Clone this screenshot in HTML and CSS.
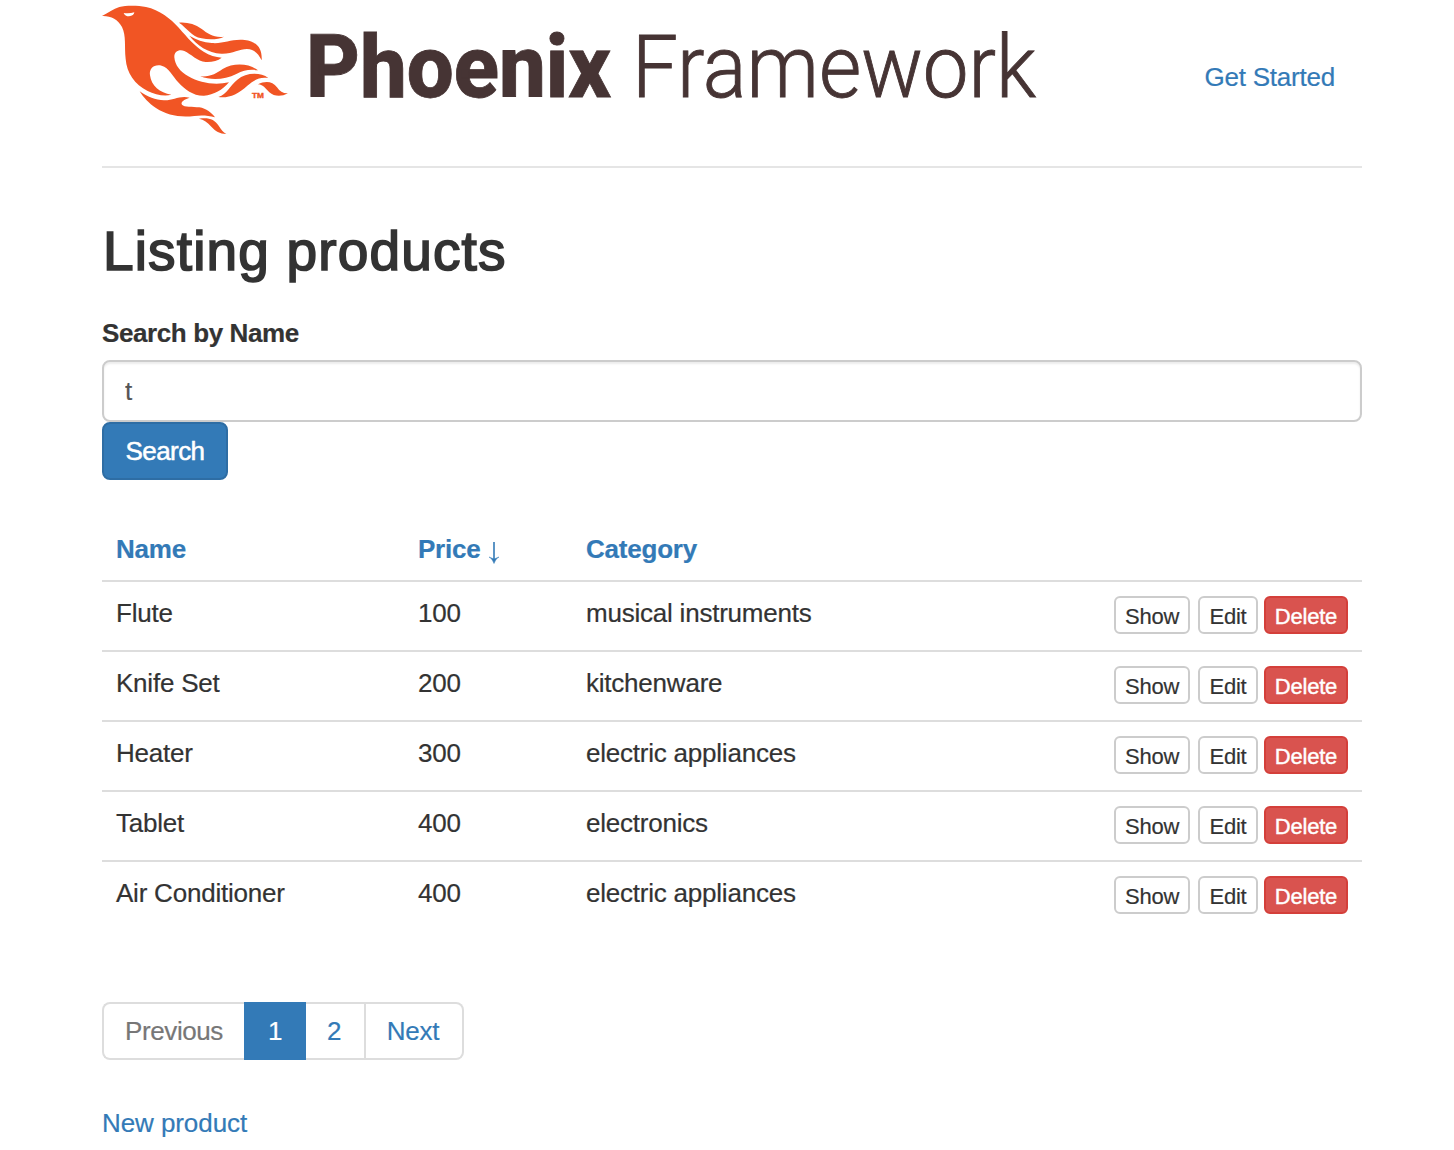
FILE: index.html
```
<!DOCTYPE html>
<html lang="en">
<head>
<meta charset="utf-8">
<title>Phoenix Framework - Listing products</title>
<link rel="stylesheet" href="styles.css">
</head>
<body>
<div class="container">
  <header class="header">
    <svg class="logo" width="940" height="140" viewBox="0 0 940 140" role="img" aria-label="Phoenix Framework">
      <g class="bird" transform="translate(-7 0) scale(.33333)">
        <path fill-rule="evenodd" d="M21 48C40 38 55 27 73 21C93 16 128 16 153 21C194 30 226 55 252 84C278 114 299 138 326 155C344 166 361 171 380 173C368 183 350 187 332 186C307 184 288 162 268 153C252 147 237 155 238 172C240 197 256 215 280 229C315 249 360 257 402 247C382 270 357 285 327 287C295 288 270 268 251 248C232 228 222 203 200 197C177 192 162 205 165 226C169 258 194 279 229 284C210 290 179 284 158 273C119 253 95 219 92 177C88 139 94 108 81 81C69 58 47 47 21 48ZM86 39Q102 42 118 37Q117 48 102 49Q90 49 86 39Z"/>
        <path d="M252 68C276 66 300 72 319 86C339 101 357 114 387 110C370 119 342 120 320 115C289 109 276 84 252 68Z"/>
        <path d="M283 107C304 119 325 127 350 129C388 132 408 116 449 120C486 124 502 145 500 181C490 161 478 148 456 147C432 147 414 162 379 161C339 159 306 136 283 107Z"/>
        <path d="M316 229C348 231 364 220 383 207C416 187 463 190 489 211C463 207 447 211 424 222C390 239 349 242 316 229Z"/>
        <path d="M370 291C397 282 403 258 427 239C453 217 496 216 520 234C493 230 478 240 457 257C428 283 402 295 370 291Z"/>
        <path d="M489 253C511 242 533 244 546 262C555 275 565 281 579 280C559 291 538 290 523 277C511 265 506 255 489 253Z"/>
        <path d="M134 274C158 291 181 300 207 301C235 302 252 286 284 293C267 298 256 306 261 314C267 322 293 319 313 322C334 326 350 338 360 352C338 346 319 345 298 348C254 353 216 346 184 325C160 309 145 292 134 274Z"/>
        <path d="M312 356C343 352 359 359 371 377C379 389 384 396 394 402C374 401 361 393 349 380C337 367 327 359 312 356Z"/>
      </g>
      <text class="trademark" x="150" y="98" textLength="12" lengthAdjust="spacingAndGlyphs">TM</text>
      <text class="word-bold" x="204" y="96.5" textLength="305" lengthAdjust="spacingAndGlyphs">Phoenix</text>
      <text class="word-light" x="530" y="96.500" textLength="404" lengthAdjust="spacingAndGlyphs">Framework</text>
    </svg>
    <a class="start" href="#">Get Started</a>
  </header>
  <main>
    <h2 class="title">Listing products</h2>
    <form class="search">
      <label class="label" for="q">Search by Name</label>
      <input class="field" id="q" type="text" value="t">
      <button class="submit" type="button">Search</button>
    </form>
    <table class="products">
      <colgroup><col class="col-name"><col class="col-price"><col><col class="col-actions"></colgroup>
      <thead>
        <tr><th><a href="#">Name</a></th><th><a href="#">Price <svg class="arrow" width="12" height="24" viewBox="0 0 12 24"><path d="M6 2V21"/><path class="arrow-head" d="M1 17Q4 18 6 23.500Q8 18 11 17L6 19Z"/></svg></a></th><th><a href="#">Category</a></th><th></th></tr>
      </thead>
      <tbody>
        <tr><td>Flute</td><td>100</td><td>musical instruments</td><td><div class="actions"><a class="btn show">Show</a><a class="btn edit">Edit</a><a class="btn delete">Delete</a></div></td></tr>
        <tr><td>Knife Set</td><td>200</td><td>kitchenware</td><td><div class="actions"><a class="btn show">Show</a><a class="btn edit">Edit</a><a class="btn delete">Delete</a></div></td></tr>
        <tr><td>Heater</td><td>300</td><td>electric appliances</td><td><div class="actions"><a class="btn show">Show</a><a class="btn edit">Edit</a><a class="btn delete">Delete</a></div></td></tr>
        <tr><td>Tablet</td><td>400</td><td>electronics</td><td><div class="actions"><a class="btn show">Show</a><a class="btn edit">Edit</a><a class="btn delete">Delete</a></div></td></tr>
        <tr><td>Air Conditioner</td><td>400</td><td>electric appliances</td><td><div class="actions"><a class="btn show">Show</a><a class="btn edit">Edit</a><a class="btn delete">Delete</a></div></td></tr>
      </tbody>
    </table>
    <nav class="pagination">
      <span class="page previous">Previous</span><span class="page active">1</span><a class="page second" href="#">2</a><a class="page next" href="#">Next</a>
    </nav>
    <a class="new" href="#">New product</a>
  </main>
</div>
</body>
</html>
```
FILE: styles.css
```
* { box-sizing: border-box; }
html { overflow: hidden; }
body {
  margin: 0;
  background: #fff;
  color: #333;
  font: 26px/36px "Liberation Sans", Arial, sans-serif;
  letter-spacing: -0.22px;
  -webkit-text-stroke: .2px currentColor;
}
a { color: #337ab7; text-decoration: none; }
.container { width: 1260px; margin-left: 102px; }
.header {
  display: flex;
  justify-content: space-between;
  height: 168px;
  padding-right: 27px;
  border-bottom: 2px solid #e5e5e5;
}
.logo { display: block; overflow: visible; -webkit-text-stroke: 0; }
.bird { fill: #f15524; }
.trademark { fill: #f15524; stroke: #f15524; stroke-width: .4px; font: 700 8px "Liberation Sans", Arial, sans-serif; letter-spacing: 0; }
.word-bold { fill: #463434; stroke: #463434; stroke-width: .8px; font: 800 87px Roboto, sans-serif; letter-spacing: 0; }
.word-light { fill: #463434; stroke: #463434; stroke-width: .9px; font: 300 87px Roboto, sans-serif; letter-spacing: 0; }
.start { margin-top: 59px; }
.title {
  margin: 52px 0 0;
  font-size: 55px;
  line-height: 62px;
  font-weight: 400;
  letter-spacing: 1.15px;
  text-indent: 1px;
  -webkit-text-stroke: 1.7px #333;
}
.search { display: flex; flex-direction: column; align-items: flex-start; margin-top: 33px; }
.label { font-weight: 700; letter-spacing: -.4px; }
.field {
  width: 100%;
  height: 62px;
  margin-top: 9px;
  padding: 0 21px;
  border: 2px solid #ccc;
  border-radius: 8px;
  box-shadow: inset 0 2px 2px rgba(0, 0, 0, .075);
  color: #555;
  font: inherit;
}
.submit {
  width: 126px;
  height: 58px;
  padding: 0;
  border: 2px solid #2e6da4;
  border-radius: 8px;
  background: #337ab7;
  color: #fff;
  font: inherit;
  letter-spacing: -.6px;
  -webkit-text-stroke: .5px #fff;
}
.products { width: 100%; margin-top: 38px; border-collapse: separate; border-spacing: 0; table-layout: fixed; }
.col-name { width: 302px; }
.col-price { width: 168px; }
.col-actions { width: 270px; }
th { height: 64px; padding: 13px 14px; border-bottom: 2px solid #ddd; text-align: left; vertical-align: top; }
td { height: 70px; padding: 13px 14px 0; border-bottom: 2px solid #ddd; vertical-align: top; }
tr:last-child td { border-bottom: 0; }
.arrow { vertical-align: -6px; fill: none; stroke: #337ab7; stroke-width: 1.6; }
.arrow-head { fill: #337ab7; stroke-width: .5; }
.actions { display: flex; justify-content: flex-end; padding-top: 1px; }
.btn {
  height: 38px;
  border: 2px solid #ccc;
  border-radius: 6px;
  color: #333;
  font-size: 22px;
  line-height: 37px;
  text-align: center;
}
.show { width: 76px; margin-right: 8px; }
.edit { width: 60px; margin-right: 6px; }
.delete { width: 84px; border-color: #d43f3a; background: #d9534f; color: #fff; -webkit-text-stroke: .4px #fff; }
.pagination { display: flex; width: 362px; height: 58px; margin-top: 70px; }
.page { border: 2px solid #ddd; line-height: 54px; text-align: center; }
.previous { width: 142px; border-right: 0; border-radius: 8px 0 0 8px; color: #777; letter-spacing: -.4px; }
.active { width: 62px; border-color: #337ab7; background: #337ab7; color: #fff; }
.second { width: 60px; border-left: 0; padding-right: 2px; }
.next { width: 98px; border-left: 0; padding-right: 2px; border-radius: 0 8px 8px 0; }
.new { display: inline-block; margin-top: 45px; letter-spacing: -.08px; }
```
